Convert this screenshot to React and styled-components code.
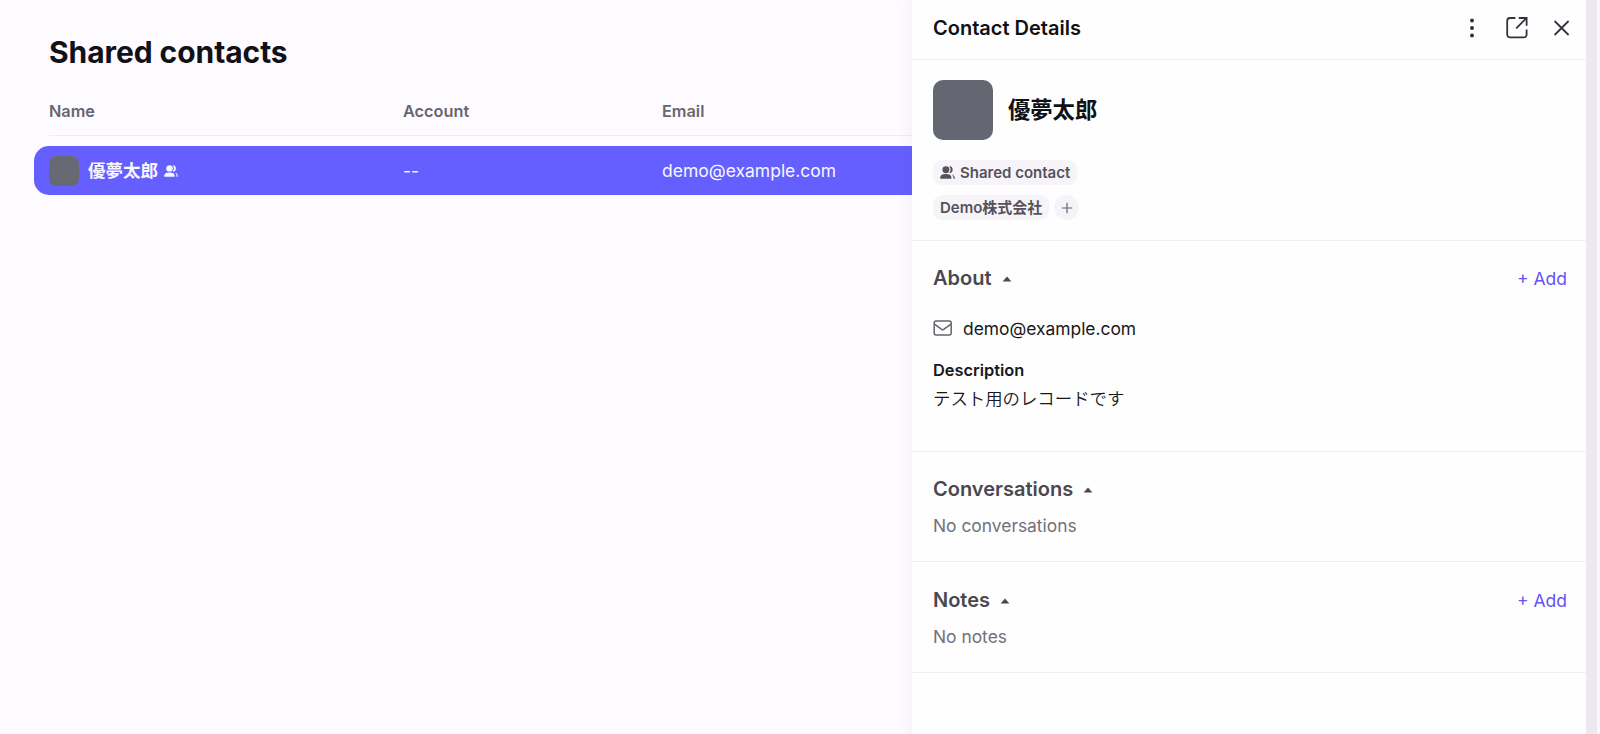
import React, { useState } from "react";
import styled, { createGlobalStyle } from "styled-components";

const contact = {
  name: "優夢太郎",
  account: "--",
  email: "demo@example.com",
  company: "Demo株式会社",
  description: "テスト用のレコードです",
};

const PeopleIcon = ({ size }) => (
  <svg width={size} height={size} viewBox="0 0 16 16" fill="currentColor">
    <circle cx="6.3" cy="5" r="3.7" />
    <path d="M0.3 14.6 V13.2 C0.3 10.8 2.4 9.6 6.2 9.6 S12.1 10.8 12.1 13.2 V14.6 Z" />
    <path d="M9.8 1.3 A3.7 3.7 0 0 1 9.8 8.7 A5.8 5.8 0 0 0 9.8 1.3 Z" />
    <path d="M12.4 9.8 C14.6 10.4 15.8 11.6 15.8 14.6 H14.4 C14.4 12.2 13.8 10.9 12.4 9.8 Z" />
  </svg>
);

const MoreIcon = () => (
  <svg width="24" height="24" viewBox="0 0 24 24" fill="currentColor">
    <circle cx="12" cy="4.5" r="2" />
    <circle cx="12" cy="12" r="2" />
    <circle cx="12" cy="19.5" r="2" />
  </svg>
);

const OpenIcon = () => (
  <svg width="24" height="24" viewBox="0 0 24 24" fill="none" stroke="currentColor" strokeWidth="1.8">
    <path d="M10.4 2 H5 A2.8 2.8 0 0 0 2.2 4.8 V18.6 A2.8 2.8 0 0 0 5 21.4 H18.8 A2.8 2.8 0 0 0 21.6 18.6 V13.4" />
    <path d="M13.8 2 H21.6 V9.8" />
    <path d="M21.2 2.4 L11.2 12.4" />
  </svg>
);

const CloseIcon = () => (
  <svg width="24" height="24" viewBox="0 0 24 24" fill="none" stroke="currentColor" strokeWidth="1.8">
    <path d="M4.6 5 L18.6 19 M18.6 5 L4.6 19" />
  </svg>
);

const MailIcon = () => (
  <svg width="20" height="20" viewBox="0 0 20 20" fill="none" stroke="currentColor" strokeWidth="1.5">
    <rect x="1.2" y="3" width="17" height="14" rx="2" />
    <path d="M1.5 6.2 L8.7 11.3 Q9.7 12 10.7 11.3 L17.9 6.2" />
  </svg>
);

const PlusIcon = () => (
  <svg width="12" height="12" viewBox="0 0 12 12" fill="none" stroke="currentColor" strokeWidth="1.2">
    <path d="M6 0.8 V11.2 M0.8 6 H11.2" />
  </svg>
);

const Section = ({ title, height, offset, canAdd, children }) => {
  const [open, setOpen] = useState(true);

  return (
    <SectionBox $height={height} $offset={offset}>
      <SectionHead>
        <SectionToggle onClick={() => setOpen(!open)}>
          {title}
          <Caret $open={open} viewBox="0 0 10 6">
            <path d="M5 0.6 L9.4 5.4 H0.6 Z" fill="currentColor" />
          </Caret>
        </SectionToggle>
        {canAdd && (
          <AddButton>
            <span>+</span> Add
          </AddButton>
        )}
      </SectionHead>
      {open && children}
    </SectionBox>
  );
};

const App = () => {
  return (
    <>
      <GlobalStyle />
      <Page>
        <Main>
          <Title>Shared contacts</Title>
          <TableHead>
            <span>Name</span>
            <span>Account</span>
            <span>Email</span>
          </TableHead>
          <TableRow>
            <NameCell>
              <Avatar $size={30} $radius={7} $color="#686a73" />
              <RowName>{contact.name}</RowName>
              <PeopleIcon size={14} />
            </NameCell>
            <span>{contact.account}</span>
            <span>{contact.email}</span>
          </TableRow>
        </Main>

        <Panel>
          <PanelHeader>
            <PanelTitle>Contact Details</PanelTitle>
            <Actions>
              <IconButton aria-label="More"><MoreIcon /></IconButton>
              <IconButton aria-label="Open"><OpenIcon /></IconButton>
              <IconButton aria-label="Close"><CloseIcon /></IconButton>
            </Actions>
          </PanelHeader>

          <Profile>
            <ProfileTop>
              <Avatar $size={60} $radius={10} $color="#646772" />
              <ProfileName>{contact.name}</ProfileName>
            </ProfileTop>
            <Pills>
              <Pill>
                <PeopleIcon size={15} />
                Shared contact
              </Pill>
            </Pills>
            <Pills>
              <Pill>{contact.company}</Pill>
              <RoundPill aria-label="Add account"><PlusIcon /></RoundPill>
            </Pills>
          </Profile>

          <Section title="About" height={211} offset={22} canAdd>
            <EmailLine>
              <MailIcon />
              <span>{contact.email}</span>
            </EmailLine>
            <Label>Description</Label>
            <Description>{contact.description}</Description>
          </Section>
          <Section title="Conversations" height={110} offset={22}>
            <Empty>No conversations</Empty>
          </Section>
          <Section title="Notes" height={111} offset={23} canAdd>
            <Empty>No notes</Empty>
          </Section>
        </Panel>
        <Gutter />
      </Page>
    </>
  );
};

export default App;

// ===== STYLES =====

const GlobalStyle = createGlobalStyle`
  * {
    box-sizing: border-box;
  }

  body {
    margin: 0;
    overflow: hidden;
    font-family: Inter, "Noto Sans CJK JP", sans-serif;
    color: #18181b;
  }

  svg {
    display: block;
    flex-shrink: 0;
  }
`;

const Page = styled.div`
  display: flex;
  height: 734px;
  background: #fdfbff;
`;

const Main = styled.main`
  flex: 1;
  min-width: 0;
  padding: 32px 0 0 34px;
`;

const Title = styled.h1`
  margin: 0 0 0 15px;
  font-size: 30px;
  font-weight: 700;
  line-height: 40px;
  letter-spacing: -0.07px;
  color: #121118;
`;

const columns = `
  display: grid;
  grid-template-columns: 354px 259px 1fr;
  align-items: center;
`;

const TableHead = styled.div`
  ${columns}
  height: 51px;
  margin: 13px 0 10px 15px;
  padding-top: 1px;
  border-bottom: 1px solid #efedf3;
  font-size: 16.3px;
  font-weight: 600;
  color: #68666e;
`;

const TableRow = styled.div`
  ${columns}
  height: 49px;
  padding-left: 15px;
  border-radius: 15px 0 0 15px;
  background: #655fff;
  font-size: 17.5px;
  color: #f8f7ff;
`;

const NameCell = styled.div`
  display: flex;
  align-items: center;
`;

const RowName = styled.span`
  margin: 0 6px 0 9px;
  font-weight: 700;
  line-height: 24px;
`;

const Avatar = styled.div`
  flex-shrink: 0;
  width: ${({ $size }) => $size}px;
  height: ${({ $size }) => $size}px;
  border-radius: ${({ $radius }) => $radius}px;
  background: ${({ $color }) => $color};
`;

const Panel = styled.aside`
  width: 674px;
  background: #fefefe;
  box-shadow: 0 0 14px rgba(80, 60, 120, 0.08);
  clip-path: inset(0 0 0 -14px);
`;

const PanelHeader = styled.header`
  display: flex;
  align-items: center;
  justify-content: space-between;
  height: 60px;
  padding: 0 12px 4px 21px;
  border-bottom: 1px solid #efeef2;
`;

const PanelTitle = styled.h2`
  margin: 0;
  font-size: 20px;
  font-weight: 600;
  color: #111015;
`;

const Actions = styled.div`
  display: flex;
  gap: 21px;
  color: #34323c;
`;

const BaseButton = styled.button`
  padding: 0;
  border: none;
  background: none;
  font-family: inherit;
  cursor: pointer;
`;

const IconButton = styled(BaseButton)`
  width: 24px;
  height: 24px;
  color: inherit;
`;

const Profile = styled.section`
  height: 181px;
  padding: 20px 21px 0;
  border-bottom: 1px solid #efeef4;
`;

const ProfileTop = styled.div`
  display: flex;
  align-items: center;
  gap: 15px;
  margin-bottom: 20px;
`;

const ProfileName = styled.div`
  font-size: 22.3px;
  font-weight: 600;
  line-height: 30px;
  color: #111015;
`;

const Pills = styled.div`
  display: flex;
  gap: 5px;
  margin-bottom: 10px;
`;

const Pill = styled.div`
  display: flex;
  align-items: center;
  gap: 5px;
  height: 25px;
  padding: 0 7px;
  border-radius: 9px;
  background: #f6f4f9;
  font-size: 15px;
  font-weight: 600;
  line-height: 25px;
  color: #55525b;
`;

const RoundPill = styled(BaseButton)`
  display: grid;
  place-items: center;
  width: 25px;
  height: 25px;
  border-radius: 50%;
  background: #f6f4f9;
  color: #65626b;
`;

const SectionBox = styled.section`
  height: ${({ $height }) => $height}px;
  padding: ${({ $offset }) => $offset}px 19px 0 21px;
  border-bottom: 1px solid #efeef3;
`;

const SectionHead = styled.div`
  display: flex;
  align-items: center;
  justify-content: space-between;
  height: 30px;
`;

const SectionToggle = styled(BaseButton)`
  display: flex;
  align-items: center;
  gap: 10px;
  font-size: 20px;
  font-weight: 600;
  color: #4a484f;
`;

const Caret = styled.svg`
  width: 10px;
  height: 6px;
  margin-top: 2px;
  transform: ${({ $open }) => ($open ? "none" : "rotate(180deg)")};
`;

const AddButton = styled(BaseButton)`
  font-size: 17.5px;
  color: #6553f4;
`;

const EmailLine = styled.div`
  display: flex;
  align-items: center;
  gap: 10px;
  height: 24px;
  margin-top: 23px;
  font-size: 17.4px;

  svg {
    color: #66646c;
  }
`;

const Label = styled.div`
  margin-top: 18px;
  font-size: 16.4px;
  font-weight: 600;
  line-height: 24px;
`;

const Description = styled.div`
  margin-top: 4px;
  font-size: 17.4px;
  font-weight: 350;
  line-height: 26px;
`;

const Empty = styled.div`
  margin-top: 10px;
  font-size: 17.4px;
  line-height: 24px;
  color: #737178;
`;

const Gutter = styled.div`
  width: 14px;
  border-right: 3px solid #faf6fb;
  background: #ebe8f2;
`;
